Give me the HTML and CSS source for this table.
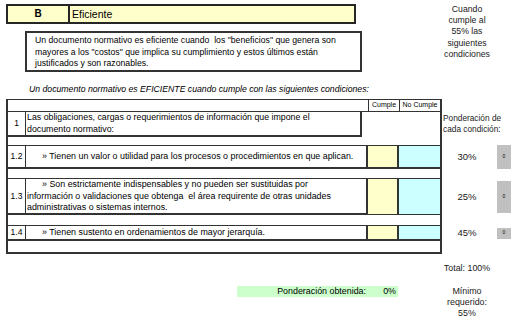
FILE: index.html
```html
<!DOCTYPE html>
<html lang="es">
<head>
<meta charset="utf-8">
<title>Eficiente</title>
<link rel="stylesheet" href="styles.css">
</head>
<body>
<div class="top">
  <div class="intro">
    <div class="title-bar">
      <div class="code">B</div>
      <div class="name">Eficiente</div>
    </div>
    <p class="desc">Un documento normativo es eficiente cuando&nbsp; los "beneficios" que genera son<br>mayores a los "costos" que implica su cumplimiento y estos últimos están<br>justificados y son razonables.</p>
  </div>
  <p class="rule">Cuando<br>cumple al<br>55% las<br>siguientes<br>condiciones</p>
</div>

<p class="lead">Un documento normativo es EFICIENTE cuando cumple con las siguientes condiciones:</p>

<div class="sheet">
  <div class="t hdr">
    <div></div><div></div>
    <div class="hcell">Cumple</div>
    <div class="hcell">No Cumple</div>
  </div>
  <div class="side"></div>

  <div class="t row1">
    <div class="box">
      <div class="num">1</div>
      <div class="txt">Las obligaciones, cargas o requerimientos de información que impone el<br>documento normativo:</div>
    </div>
  </div>
  <div class="side note">Ponderación de<br>cada condición:</div>

  <div class="t gap g1"></div>
  <div class="side"></div>

  <div class="t row r12">
    <div class="num">1.2</div>
    <div class="txt"><span class="ind">» Tienen un valor o utilidad para los procesos o procedimientos en que aplican.</span></div>
    <div class="yes"></div>
    <div class="no"></div>
  </div>
  <div class="pct">30%</div>
  <div class="score"><span class="chip c12">0</span></div>

  <div class="t gap g2"></div>
  <div class="side"></div>

  <div class="t row r13">
    <div class="num">1.3</div>
    <div class="txt"><span class="ind">» Son estrictamente indispensables y no pueden ser sustituidas por</span><br>información o validaciones que obtenga&nbsp; el área requirente de otras unidades<br>administrativas o sistemas internos.</div>
    <div class="yes"></div>
    <div class="no"></div>
  </div>
  <div class="pct">25%</div>
  <div class="score"><span class="chip c13">0</span></div>

  <div class="t gap g3"></div>
  <div class="side"></div>

  <div class="t row r14">
    <div class="num">1.4</div>
    <div class="txt"><span class="ind">» Tienen sustento en ordenamientos de mayor jerarquía.</span></div>
    <div class="yes"></div>
    <div class="no"></div>
  </div>
  <div class="pct">45%</div>
  <div class="score"><span class="chip c14">0</span></div>

  <div class="t gap g4 last"></div>
  <div class="side"></div>
</div>

<div class="foot">
  <div></div>
  <div class="total">Total: 100%</div>
  <div class="result">
    <span class="label">Ponderación obtenida:</span>
    <span class="value">0%</span>
  </div>
  <div class="min">Mínimo<br>requerido:<br>55%</div>
</div>
</body>
</html>
```

FILE: styles.css
```css
* { box-sizing: border-box; }

body {
  margin: 0;
  background: #ffffff;
  color: #000000;
  font-family: "Liberation Sans", Arial, sans-serif;
  font-size: 8.9px;
  line-height: 11.5px;
}

p { margin: 0; }

/* ---------- top area ---------- */
.top {
  display: flex;
  align-items: flex-start;
  padding-top: 4px;
}

.intro {
  width: 362px;
  flex: none;
}

.title-bar {
  display: flex;
  margin-left: 6px;
  width: 350px;
  height: 20px;
  border: 2px solid #262626;
  background: #ffffcc;
  font-size: 10.5px;
  line-height: 16px;
}

.code {
  width: 62px;
  border-right: 2px solid #262626;
  text-align: center;
  font-weight: bold;
  font-size: 10px;
}

.name {
  padding-left: 2px;
}

.desc {
  margin: 7px 0 0 25px;
  width: 337px;
  height: 41px;
  border: 2px solid #333333;
  padding: 2px 0 0 8px;
  font-size: 8.7px;
  white-space: nowrap;
}

.rule {
  margin: 0 0 0 75px;
  width: 60px;
  text-align: center;
  line-height: 11.2px;
  font-size: 8.7px;
  color: #1a1a1a;
}

.lead {
  margin: 12px 0 0 29px;
  font-style: italic;
  font-size: 8.7px;
  line-height: 11px;
}

/* ---------- sheet ---------- */
.sheet {
  display: grid;
  grid-template-columns: 436px 50px 19px;
  margin: 4px 0 0 6px;
}

.t {
  grid-column: 1;
  border-left: 2px solid #333333;
  border-right: 2px solid #333333;
}

.side {
  grid-column: 2 / span 2;
}

.hdr {
  display: grid;
  grid-template-columns: 18px 342px 31px 41px;
  height: 13px;
  border-top: 1px solid #333333;
  border-bottom: 1px solid #333333;
}

.hcell {
  border-left: 1px solid #333333;
  font-size: 7px;
  line-height: 10px;
  text-align: center;
  white-space: nowrap;
}

.row1 {
  height: 25px;
}

.box {
  display: flex;
  width: 354px;
  height: 25px;
  border-right: 2px solid #333333;
  border-bottom: 2px solid #333333;
}

.num {
  width: 18px;
  flex: none;
  border-right: 1px solid #333333;
  display: flex;
  align-items: center;
  justify-content: center;
  font-size: 8.5px;
}

.box .txt {
  padding: 0 0 0 1px;
  font-size: 8.8px;
  white-space: nowrap;
}

.note {
  align-self: end;
  padding: 0 0 2px 1px;
  font-size: 8.3px;
  line-height: 11px;
  color: #222222;
  white-space: nowrap;
}

.gap.g1 { height: 8px; }
.gap.g2 { height: 9px; }
.gap.g3 { height: 10px; }
.gap.g4 { height: 13px; }
.gap.last { border-bottom: 2px solid #333333; }

.row {
  display: grid;
  grid-template-columns: 18px 342px 31px 41px;
  border-top: 1px solid #333333;
  border-bottom: 2px solid #333333;
}

.row.r12 { height: 24px; }
.row.r13 { height: 37px; }
.row.r14 { height: 16px; }

.row .txt {
  height: 100%;
  border-right: 2px solid #333333;
  padding-left: 1px;
  white-space: nowrap;
  display: flex;
  flex-direction: column;
  justify-content: center;
}

.r13 .txt {
  display: block;
  line-height: 11.7px;
}

.ind {
  padding-left: 15px;
}

.yes {
  background: #ffffcc;
  border-right: 2px solid #333333;
}

.no {
  background: #ccffff;
}

.pct {
  grid-column: 2;
  display: flex;
  align-items: center;
  justify-content: center;
  font-size: 9.5px;
  color: #1a1a1a;
}

.score {
  grid-column: 3;
  display: flex;
  align-items: center;
}

.chip {
  margin-left: 5px;
  width: 14px;
  background: #c0c0c0;
  font-size: 5px;
  display: flex;
  align-items: center;
  justify-content: center;
}

.chip.c12 { height: 24px; }
.chip.c13 { height: 32px; }
.chip.c14 { height: 11px; }

/* ---------- footer ---------- */
.foot {
  display: grid;
  grid-template-columns: 436px 50px;
  row-gap: 12px;
  margin: 9px 0 0 6px;
  line-height: 11px;
}

.total {
  text-align: center;
  white-space: nowrap;
  color: #1a1a1a;
}

.result {
  margin-left: 231px;
  width: 161px;
  height: 11px;
  background: #ccffcc;
  display: flex;
  justify-content: flex-end;
  align-self: start;
}

.value {
  width: 32px;
  text-align: right;
  padding-right: 2px;
}

.min {
  text-align: center;
  color: #1a1a1a;
}
```
